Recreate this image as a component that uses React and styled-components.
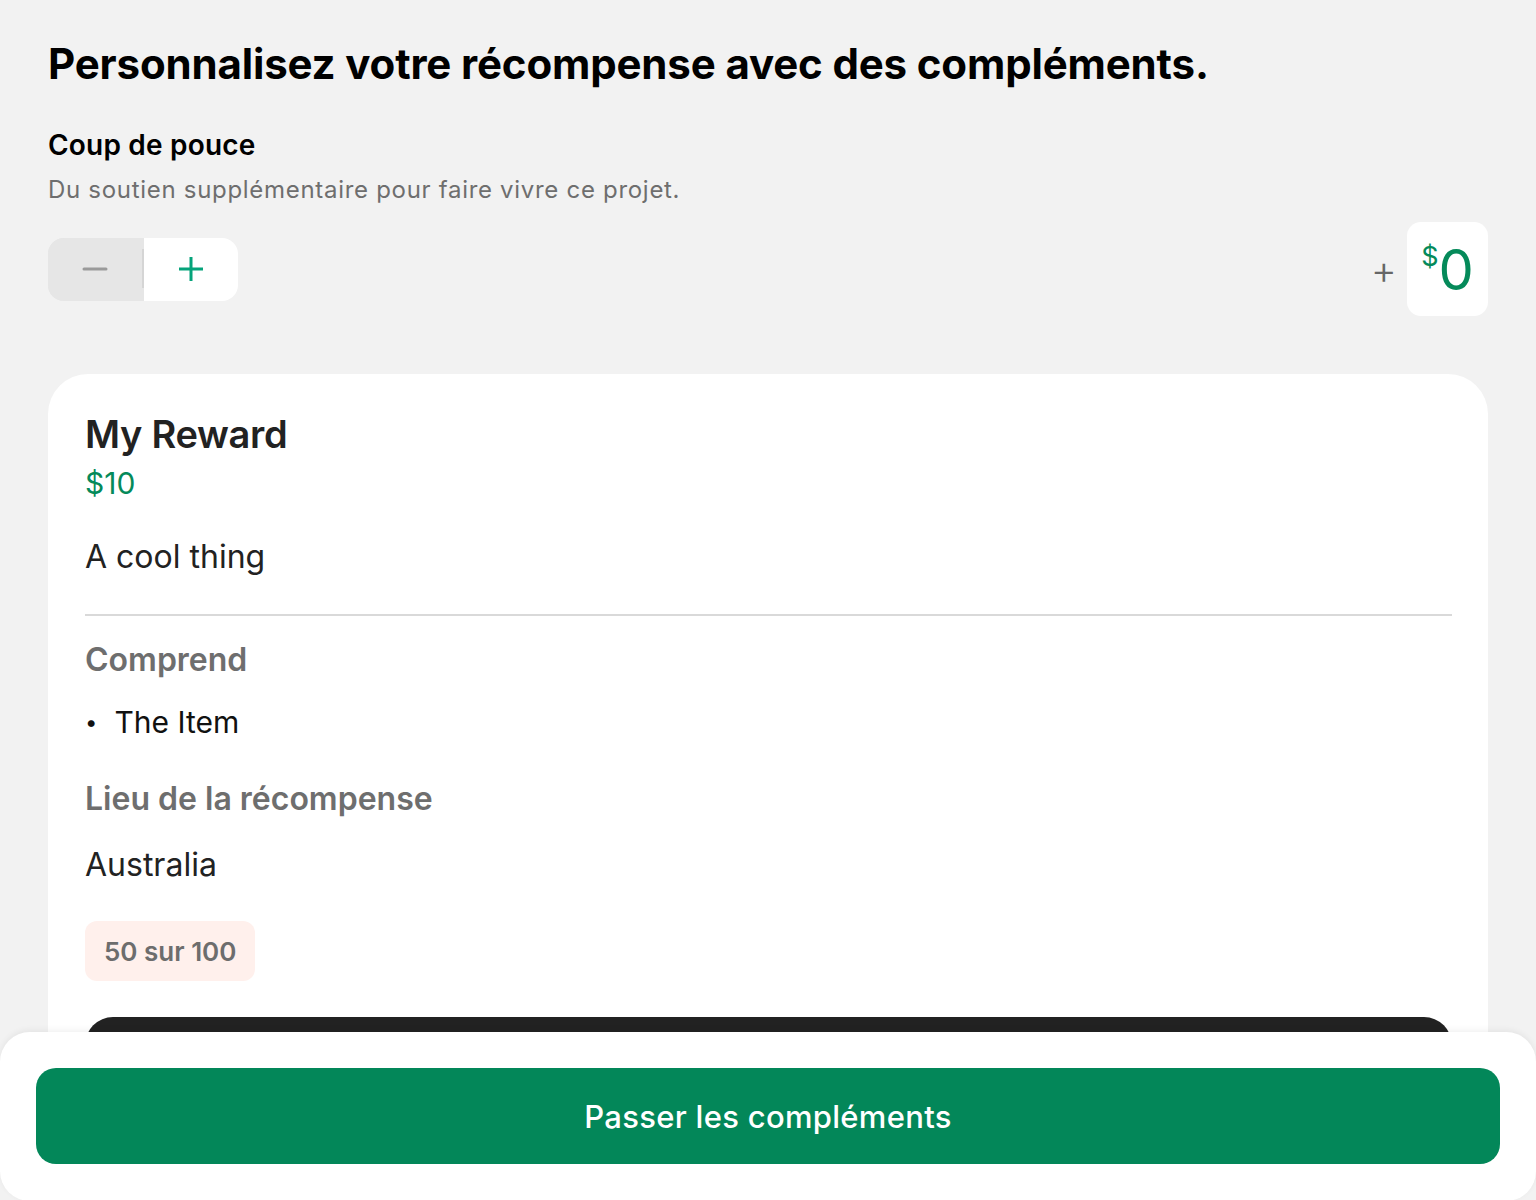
import React from "react";
import styled, { createGlobalStyle } from "styled-components";

const Global = createGlobalStyle`
  html, body { margin: 0; padding: 0; background: #f2f2f2; overflow: hidden; }
  body { font-family: Inter, "Noto Sans", "Liberation Sans", sans-serif; -webkit-font-smoothing: antialiased; }
  * { box-sizing: border-box; }
`;

const Page = styled.main`
  padding: 38px 48px 0 48px;
  height: 1200px;
  overflow: hidden;
`;

const Title = styled.h1`
  margin: 0;
  font-size: 42px;
  font-weight: 700;
  letter-spacing: -0.15px;
  color: #000;
  line-height: 52px;
`;

const SectionTitle = styled.h2`
  margin: 37px 0 0;
  font-size: 28px;
  font-weight: 600;
  letter-spacing: 0.2px;
  color: #000;
  line-height: 36px;
`;

const Sub = styled.p`
  margin: 11px 0 0;
  font-size: 24px;
  font-weight: 400;
  letter-spacing: 0.7px;
  color: #6e6e6e;
  line-height: 32px;
`;

const StepRow = styled.div`
  margin-top: 16px;
  display: flex;
  align-items: center;
  justify-content: space-between;
`;

const Stepper = styled.div`
  display: flex;
  height: 63px;
  border-radius: 16px;
  overflow: hidden;
`;

const StepBtn = styled.button`
  width: 94px;
  height: 63px;
  border: none;
  padding: 0;
  display: flex;
  align-items: center;
  justify-content: center;
  background: ${(p) => (p.$disabled ? "#e6e6e6" : "#ffffff")};
`;

const Divider = styled.span`
  width: 2px;
  background: #d5d5d5;
  margin: 11px 0 13px;
`;

const StepCol = styled.div`
  display: flex;
  background: #e6e6e6;
`;

const Amount = styled.div`
  display: flex;
  align-items: center;
  gap: 10px;
`;

const PlusSign = styled.span`
  font-size: 40px;
  line-height: 40px;
  color: #666;
  font-weight: 300;
  margin-top: 2px;
`;

const AmountBox = styled.div`
  width: 81px;
  height: 94px;
  background: #fff;
  border-radius: 14px;
  display: flex;
  align-items: flex-start;
  justify-content: center;
  padding-top: 18px;
  color: #058a5a;
`;

const Currency = styled.span`
  font-size: 27px;
  line-height: 30px;
  margin-top: 2px;
`;

const Value = styled.span`
  font-size: 56px;
  line-height: 60px;
  font-weight: 400;
`;

const Card = styled.section`
  margin-top: 58px;
  background: #fff;
  border-radius: 40px;
  padding: 37px 36px 200px 37px;
`;

const RewardName = styled.h3`
  margin: 0;
  font-size: 38px;
  font-weight: 600;
  color: #222;
  letter-spacing: -0.3px;
  line-height: 46px;
`;

const Price = styled.div`
  margin-top: 7px;
  font-size: 30px;
  color: #058a5a;
  line-height: 38px;
`;

const Desc = styled.p`
  margin: 35px 0 0;
  font-size: 32px;
  color: #222;
  line-height: 40px;
`;

const Rule = styled.hr`
  margin: 37px 0 0;
  border: none;
  border-top: 2px solid #d9d9d9;
`;

const Label = styled.h4`
  margin: ${(p) => p.$mt || "26px"} 0 0;
  font-size: 32px;
  font-weight: 600;
  color: #6e6e6e;
  letter-spacing: 0px;
  line-height: 40px;
`;

const List = styled.ul`
  margin: 23px 0 0;
  padding: 0;
  list-style: none;
`;

const Item = styled.li`
  display: flex;
  align-items: center;
  font-size: 30px;
  color: #111;
  line-height: 38px;
  &::before {
    content: "•";
    font-size: 22px;
    margin: 0 17px 0 0;
  }
`;

const Place = styled.p`
  margin: 26px 0 0;
  font-size: 32px;
  color: #222;
  line-height: 40px;
`;

const Badge = styled.span`
  display: inline-flex;
  align-items: center;
  margin-top: 36px;
  height: 60px;
  padding: 0 19px;
  background: #fff0ec;
  border-radius: 12px;
  font-size: 26px;
  font-weight: 600;
  color: #6d6d6d;
`;

const DarkBtn = styled.div`
  margin-top: 36px;
  height: 96px;
  background: #222;
  border-radius: 28px;
`;

const Sheet = styled.footer`
  position: fixed;
  left: 0;
  right: 0;
  bottom: -1px;
  height: 169px;
  background: #fff;
  border-radius: 30px;
  box-shadow: 0 -2px 6px rgba(0, 0, 0, 0.06);
  padding: 36px 36px 0;
`;

const Primary = styled.button`
  width: 100%;
  height: 96px;
  border: none;
  border-radius: 20px;
  background: #038759;
  color: #fff;
  font-family: inherit;
  font-size: 31px;
  letter-spacing: 0.3px;
  font-weight: 500;
`;

export default function App() {
  return (
    <>
      <Global />
      <Page>
        <Title>Personnalisez votre récompense avec des compléments.</Title>
        <SectionTitle>Coup de pouce</SectionTitle>
        <Sub>Du soutien supplémentaire pour faire vivre ce projet.</Sub>
        <StepRow>
          <Stepper>
            <StepCol>
              <StepBtn $disabled aria-label="moins">
                <svg width="26" height="26" viewBox="0 0 26 26">
                  <path d="M2 13h22" stroke="#9a9a9a" strokeWidth="3" strokeLinecap="round" />
                </svg>
              </StepBtn>
              <Divider />
            </StepCol>
            <StepBtn aria-label="plus">
              <svg width="26" height="26" viewBox="0 0 26 26">
                <path d="M1 13h24M13 1v24" stroke="#05a37a" strokeWidth="3" />
              </svg>
            </StepBtn>
          </Stepper>
          <Amount>
            <PlusSign>+</PlusSign>
            <AmountBox>
              <Currency>$</Currency>
              <Value>0</Value>
            </AmountBox>
          </Amount>
        </StepRow>
        <Card>
          <RewardName>My Reward</RewardName>
          <Price>$10</Price>
          <Desc>A cool thing</Desc>
          <Rule />
          <Label $mt="24px">Comprend</Label>
          <List>
            <Item>The Item</Item>
          </List>
          <Label $mt="38px">Lieu de la récompense</Label>
          <Place>Australia</Place>
          <Badge>50 sur 100</Badge>
          <DarkBtn />
        </Card>
      </Page>
      <Sheet>
        <Primary>Passer les compléments</Primary>
      </Sheet>
    </>
  );
}
